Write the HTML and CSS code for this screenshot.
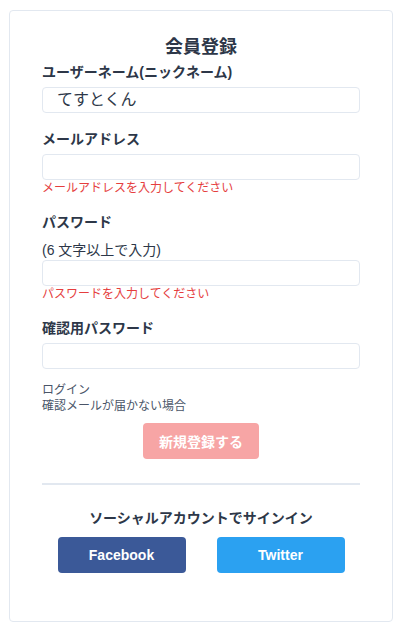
FILE: index.html
```html
<!DOCTYPE html>
<html lang="ja">
<head>
<meta charset="utf-8">
<title>会員登録</title>
<link rel="stylesheet" href="styles.css">
</head>
<body>
<div class="card">
  <h1 class="title">会員登録</h1>
  <form class="form">
    <div class="field field-first">
      <label class="label">ユーザーネーム(ニックネーム)</label>
      <div class="input">てすとくん</div>
    </div>
    <div class="field">
      <label class="label">メールアドレス</label>
      <div class="input"></div>
      <p class="error">メールアドレスを入力してください</p>
    </div>
    <div class="field">
      <label class="label">パスワード</label>
      <p class="hint">(6 文字以上で入力)</p>
      <div class="input"></div>
      <p class="error">パスワードを入力してください</p>
    </div>
    <div class="field">
      <label class="label">確認用パスワード</label>
      <div class="input"></div>
    </div>
    <div class="links">
      <a class="link">ログイン</a>
      <a class="link">確認メールが届かない場合</a>
    </div>
    <div class="submit-row">
      <button type="button" class="submit">新規登録する</button>
    </div>
  </form>
  <hr class="divider">
  <p class="social-title">ソーシャルアカウントでサインイン</p>
  <div class="social">
    <button type="button" class="social-btn facebook">Facebook</button>
    <button type="button" class="social-btn twitter">Twitter</button>
  </div>
</div>
</body>
</html>
```

FILE: styles.css
```css
* { box-sizing: border-box; }
html, body { margin: 0; padding: 0; background: #fff; }
body {
  font-family: "Liberation Sans", "Noto Sans CJK JP", sans-serif;
  color: #2d3748;
}
.card {
  margin: 10px 0 0 9px;
  width: 384px;
  height: 612px;
  border: 1px solid #e2e8f0;
  border-radius: 4px;
  padding: 24px 32px 0 32px;
}
.title {
  margin: 0;
  font-size: 18px;
  line-height: 24px;
  font-weight: 700;
  text-align: center;
}
.form { display: flex; flex-direction: column; }
.field { display: flex; flex-direction: column; margin-top: 16px; }
.field-first { margin-top: 3px; }
.label {
  font-size: 14px;
  line-height: 20px;
  font-weight: 700;
  margin-bottom: 5px;
}
.input {
  height: 26px;
  border: 1px solid #e2e8f0;
  border-radius: 4px;
  padding: 0 14px;
  font-size: 16px;
  line-height: 24px;
  color: #2d3748;
}
.hint {
  margin: 3px 0 0 0;
  font-size: 14px;
  line-height: 20px;
}
.error {
  margin: 0;
  font-size: 12px;
  line-height: 16px;
  color: #e53e3e;
}
.links {
  display: flex;
  flex-direction: column;
  margin-top: 13px;
}
.link {
  font-size: 12px;
  line-height: 16px;
  color: #4a5568;
}
.submit-row {
  display: flex;
  justify-content: center;
  margin-top: 9px;
}
.submit {
  width: 116px;
  height: 36px;
  border: none;
  border-radius: 4px;
  background: #f7a5a5;
  color: #fff;
  font-family: inherit;
  font-size: 14px;
  font-weight: 700;
}
.divider {
  margin: 24px 0 0 0;
  border: none;
  height: 2px;
  background: #e2e8f0;
}
.social-title {
  margin: 23px 0 0 0;
  font-size: 14px;
  line-height: 20px;
  font-weight: 700;
  text-align: center;
}
.social {
  display: flex;
  justify-content: center;
  gap: 31px;
  margin-top: 9px;
}
.social-btn {
  width: 128px;
  height: 36px;
  border: none;
  border-radius: 4px;
  color: #fff;
  font-family: inherit;
  font-size: 14px;
  font-weight: 700;
}
.facebook { background: #3b5998; }
.twitter { background: #2ba1f1; }
```
